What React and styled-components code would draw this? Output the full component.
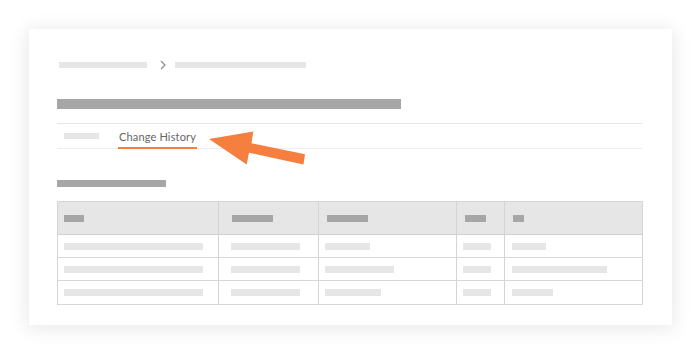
import React from "react";
import styled, { createGlobalStyle } from "styled-components";

const Global = createGlobalStyle`
  html, body { margin: 0; padding: 0; background: #ffffff; }
  body { font-family: Lato, "Liberation Sans", sans-serif; }
`;

const Page = styled.div`
  width: 700px;
  height: 352px;
  box-sizing: border-box;
  padding: 29px 0 0 29px;
`;

const Card = styled.div`
  position: relative;
  width: 643px;
  height: 296px;
  box-sizing: border-box;
  background: #ffffff;
  padding: 31px 30px 0 28px;
  box-shadow: 0 2px 18px 2px rgba(0, 0, 0, 0.09);
`;

const Bar = styled.div`
  width: ${(p) => p.$w}px;
  height: ${(p) => p.$h || 6}px;
  background: ${(p) => (p.$dark ? "#a6a6a6" : "#e6e6e6")};
  flex: none;
`;

const Crumbs = styled.div`
  display: flex;
  align-items: center;
  height: 10px;
  padding-left: 2px;
`;

const Chevron = styled.svg`
  width: 8px;
  height: 10px;
  margin: 0 8px 0 12px;
  flex: none;
`;

const Title = styled(Bar)`
  margin-top: 29px;
`;

const Tabs = styled.div`
  margin-top: 14px;
  height: 24px;
  border-top: 1px solid #e6e6e6;
  border-bottom: 1px solid #eeeeee;
  display: flex;
  align-items: stretch;
`;

const Tab = styled.div`
  position: relative;
  display: flex;
  align-items: center;
  padding: 0 ${(p) => p.$pr || 0}px 0 ${(p) => p.$pl || 0}px;
  font-size: 11px;
  color: #666666;
  letter-spacing: 0.15px;
  ${(p) =>
    p.$active &&
    `
    &::after {
      content: "";
      position: absolute;
      left: -1px;
      right: -1px;
      bottom: -1px;
      height: 2px;
      background: #f47f3f;
    }
  `}
`;

const TabLabel = styled.span`
  position: relative;
  top: 0;
`;

const Section = styled(Bar)`
  margin-top: 31px;
`;

const Table = styled.div`
  margin-top: 14px;
  display: grid;
  grid-template-columns: 161px 100px 138px 48px 138px;
  border-left: 1px solid #d4d4d4;
  border-top: 1px solid #d4d4d4;
  width: 586px;
  box-sizing: border-box;
`;

const Cell = styled.div`
  display: flex;
  align-items: center;
  height: ${(p) => (p.$head ? 32 : p.$h || 22)}px;
  padding-left: ${(p) => p.$pl}px;
  background: ${(p) => (p.$head ? "#e6e6e6" : "#ffffff")};
  border-right: 1px solid #d4d4d4;
  border-bottom: 1px solid ${(p) => (p.$head ? "#d0d0d0" : "#d8d8d8")};
`;

const Arrow = styled.svg`
  position: absolute;
  left: 0;
  top: 0;
  width: 700px;
  height: 352px;
  pointer-events: none;
`;

const columns = [
  { head: 20, hpl: 6, pl: 6, rows: [139, 139, 139] },
  { head: 41, hpl: 13, pl: 12, rows: [69, 69, 69] },
  { head: 41, hpl: 8, pl: 6, rows: [45, 69, 56] },
  { head: 21, hpl: 8, pl: 6, rows: [28, 28, 28] },
  { head: 11, hpl: 8, pl: 7, rows: [34, 95, 41] },
];

export default function App() {
  return (
    <>
      <Global />
      <Page>
        <Card>
          <Crumbs>
            <Bar $w={88} $h={6} />
            <Chevron viewBox="0 0 8 10">
              <polyline points="2,1 6,5 2,9" fill="none" stroke="#8a8a8a" strokeWidth="1.2" />
            </Chevron>
            <Bar $w={131} $h={6} />
          </Crumbs>
          <Title $w={344} $h={10} $dark />
          <Tabs>
            <Tab $pl={7} $pr={20}>
              <Bar $w={35} $h={6} />
            </Tab>
            <Tab $active>
              <TabLabel>Change History</TabLabel>
            </Tab>
          </Tabs>
          <Section $w={109} $h={7} $dark />
          <Table>
            {columns.map((c, i) => (
              <Cell key={"h" + i} $head $pl={c.hpl}>
                <Bar $w={c.head} $h={7} $dark />
              </Cell>
            ))}
            {[0, 1, 2].map((r) =>
              columns.map((c, i) => (
                <Cell key={r + "-" + i} $pl={c.pl} $h={r === 2 ? 23 : 22}>
                  <Bar $w={c.rows[r]} $h={7} />
                </Cell>
              ))
            )}
          </Table>
        </Card>
      </Page>
      <Arrow viewBox="0 0 700 352">
        <polygon
          points="209,139 253.3,131.5 251.5,143.3 305,154.3 303.5,164.5 249,152.8 246.7,164.5"
          fill="#f47f3f"
        />
      </Arrow>
    </>
  );
}
